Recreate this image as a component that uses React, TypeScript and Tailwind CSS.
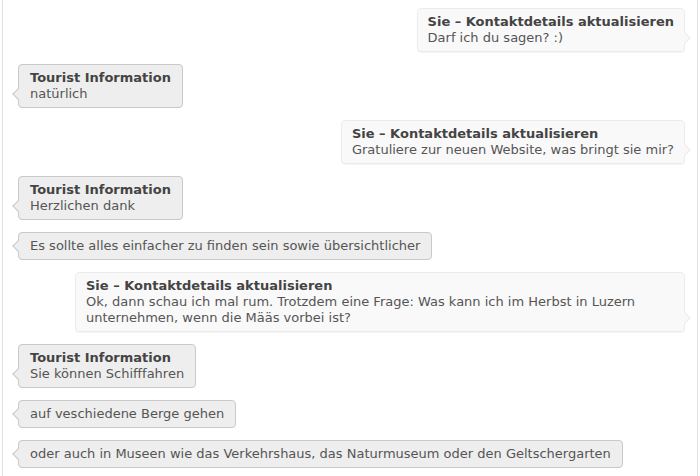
import React from 'react';

type Msg = {
  from: 'me' | 'them';
  title?: string;
  text: string;
};

const messages: Msg[] = [
  { from: 'me', title: 'Sie – Kontaktdetails aktualisieren', text: 'Darf ich du sagen? :)' },
  { from: 'them', title: 'Tourist Information', text: 'natürlich' },
  { from: 'me', title: 'Sie – Kontaktdetails aktualisieren', text: 'Gratuliere zur neuen Website, was bringt sie mir?' },
  { from: 'them', title: 'Tourist Information', text: 'Herzlichen dank' },
  { from: 'them', text: 'Es sollte alles einfacher zu finden sein sowie übersichtlicher' },
  {
    from: 'me',
    title: 'Sie – Kontaktdetails aktualisieren',
    text: 'Ok, dann schau ich mal rum. Trotzdem eine Frage: Was kann ich im Herbst in Luzern unternehmen, wenn die Määs vorbei ist?',
  },
  { from: 'them', title: 'Tourist Information', text: 'Sie können Schifffahren' },
  { from: 'them', text: 'auf veschiedene Berge gehen' },
  { from: 'them', text: 'oder auch in Museen wie das Verkehrshaus, das Naturmuseum oder den Geltschergarten' },
];

function Bubble({ msg }: { msg: Msg }) {
  const mine = msg.from === 'me';
  return (
    <div className={mine ? 'flex justify-end pl-[57px]' : 'flex justify-start'}>
      <div
        className={
          mine
            ? 'relative rounded-[4px] border border-[#ececec] bg-[#f9f9f9] px-[10px] py-[5px] shadow-[0_1px_1px_rgba(0,0,0,0.04)]'
            : 'relative rounded-[4px] border border-[#c9c9c9] bg-[#eeeeee] px-[11px] py-[5px]'
        }
      >
        {msg.title && <div className="font-bold text-[#444]">{msg.title}</div>}
        <div className="text-[#555]">{msg.text}</div>
        {mine ? (
          <span className="absolute right-[-5px] bottom-[9px] h-[8px] w-[8px] rotate-45 border-t border-r border-[#ececec] bg-[#f9f9f9]" />
        ) : (
          <span className="absolute left-[-5px] bottom-[9px] h-[8px] w-[8px] rotate-45 border-b border-l border-[#c9c9c9] bg-[#eeeeee]" />
        )}
      </div>
    </div>
  );
}

export default function App() {
  return (
    <div className="h-[476px] w-[700px] overflow-hidden bg-white">
      <div
        className="ml-[2px] flex h-full w-[696px] flex-col gap-[12px] border-x border-[#e2e2e2] pt-[8px] pr-[12px] pl-[15px] text-[13px] leading-[16px]"
        style={{ fontFamily: '"DejaVu Sans", Verdana, sans-serif' }}
      >
        {messages.map((m, i) => (
          <Bubble key={i} msg={m} />
        ))}
      </div>
    </div>
  );
}
